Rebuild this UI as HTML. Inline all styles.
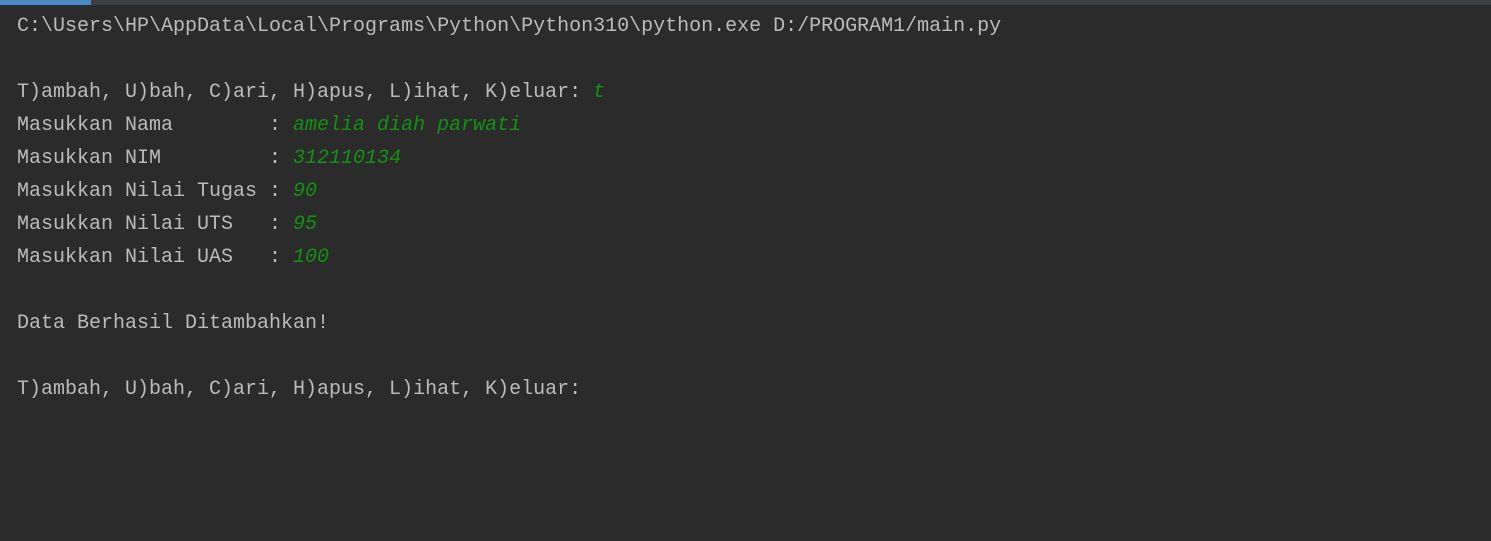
<!DOCTYPE html>
<html><head><style>
html,body{margin:0;padding:0;width:1491px;height:541px;background:#2b2b2b;overflow:hidden}
.bar{position:absolute;top:0;left:0;width:1491px;height:5px;background:#3c3f41}
.bar i{position:absolute;left:0;top:0;width:91px;height:5px;background:#4a88c7}
pre{position:absolute;left:17px;top:10px;margin:0;font-family:"Liberation Mono",monospace;font-size:20px;line-height:33px;color:#bbbbbb;white-space:pre}
.g{color:#139113;font-style:italic}
</style></head><body>
<div class="bar"><i></i></div>
<pre>C:\Users\HP\AppData\Local\Programs\Python\Python310\python.exe D:/PROGRAM1/main.py

T)ambah, U)bah, C)ari, H)apus, L)ihat, K)eluar: <span class="g">t</span>
Masukkan Nama        : <span class="g">amelia diah parwati</span>
Masukkan NIM         : <span class="g">312110134</span>
Masukkan Nilai Tugas : <span class="g">90</span>
Masukkan Nilai UTS   : <span class="g">95</span>
Masukkan Nilai UAS   : <span class="g">100</span>

Data Berhasil Ditambahkan!

T)ambah, U)bah, C)ari, H)apus, L)ihat, K)eluar: </pre>
</body></html>
